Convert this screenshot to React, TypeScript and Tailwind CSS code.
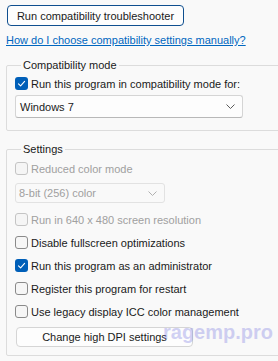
import React from "react";

const font = { fontFamily: '"Liberation Sans", Arial, sans-serif' };

function Check({ checked, disabled }: { checked?: boolean; disabled?: boolean }) {
  if (checked) {
    return (
      <span className="flex h-[13px] w-[13px] shrink-0 items-center justify-center rounded-[3px] bg-[#005fb8]">
        <svg width="9" height="9" viewBox="0 0 9 9" fill="none">
          <path d="M1.5 4.8 L3.6 6.8 L7.6 2.4" stroke="#ffffff" strokeWidth="1.1" strokeLinecap="round" strokeLinejoin="round" />
        </svg>
      </span>
    );
  }
  return (
    <span
      className={
        disabled
          ? "h-[13px] w-[13px] shrink-0 rounded-[3px] border border-[#c4c4c4] bg-[#f5f5f5]"
          : "h-[13px] w-[13px] shrink-0 rounded-[3px] border border-[#8a8a8a] bg-[#f6f6f6]"
      }
    />
  );
}

function Row({ label, checked, disabled, h = "h-[23px]" }: { label: string; checked?: boolean; disabled?: boolean; h?: string }) {
  return (
    <div className={`flex ${h} items-center gap-[3px]`}>
      <Check checked={checked} disabled={disabled} />
      <span className={disabled ? "text-[11px] text-[#a0a0a0]" : "text-[11px] text-[#1a1a1a]"}>{label}</span>
    </div>
  );
}

function Chevron({ color }: { color: string }) {
  return (
    <svg width="9" height="5" viewBox="0 0 9 5" fill="none">
      <path d="M0.5 0.5 L4.5 4.5 L8.5 0.5" stroke={color} strokeWidth="1" />
    </svg>
  );
}

export default function App() {
  return (
    <div className="relative h-[361px] w-[278px] overflow-hidden bg-[#f9f9f9] px-[6px] pt-[5px] leading-[16px]" style={font}>
      <button className="ml-px flex h-[21px] w-[177px] items-center justify-center rounded-[4px] border border-[#0f4f8f] bg-[#fdfdfd] text-[11px] text-[#1a1a1a]">
        Run compatibility troubleshooter
      </button>
      <div className="mt-[6px] h-[16px] text-[11px] text-[#0067c0] underline">How do I choose compatibility settings manually? </div>

      <fieldset className="mt-[9px] w-[290px] rounded-[2px] border border-[#dcdcdc] pb-[12px] pl-[8px]">
        <legend className="ml-[6px] px-[2px] text-[11px] text-[#1a1a1a]">Compatibility mode</legend>
        <Row label="Run this program in compatibility mode for:" checked h="h-[21px]" />
        <div className="mt-[1px] flex h-[23px] w-[228px] items-center justify-between rounded-[3px] border border-[#d5d5d5] border-b-[#b8b8b8] bg-[#fdfdfd] pl-[4px] pr-[7px]">
          <span className="text-[11px] text-[#1a1a1a]">Windows 7</span>
          <Chevron color="#5a5a5a" />
        </div>
      </fieldset>

      <fieldset className="mt-[10px] w-[290px] rounded-[2px] border border-[#dcdcdc] pb-[8px] pl-[8px]">
        <legend className="ml-[6px] px-[2px] text-[11px] text-[#1a1a1a]">Settings</legend>
        <Row label="Reduced color mode" disabled />
        <div className="mt-[3px] flex h-[20px] w-[150px] items-center justify-between rounded-[3px] border border-[#e2e2e2] bg-[#f9f9f9] pl-[3px] pr-[7px]">
          <span className="text-[11px] text-[#a0a0a0]">8-bit (256) color</span>
          <Chevron color="#b0b0b0" />
        </div>
        <div className="mt-[5px]">
          <Row label="Run in 640 x 480 screen resolution" disabled />
          <Row label="Disable fullscreen optimizations" />
          <Row label="Run this program as an administrator" checked />
          <Row label="Register this program for restart" />
          <Row label="Use legacy display ICC color management" />
        </div>
        <button className="ml-px mt-[4px] flex h-[20px] w-[177px] items-center justify-center rounded-[4px] border border-[#d5d5d5] bg-[#fdfdfd] text-[11px] text-[#1a1a1a]">
          Change high DPI settings
        </button>
      </fieldset>

      <div className="pointer-events-none absolute left-[163px] top-[320px] text-[20px] font-bold leading-[24px] text-[#6b6bde] opacity-30">
        ragemp.pro
      </div>
    </div>
  );
}
